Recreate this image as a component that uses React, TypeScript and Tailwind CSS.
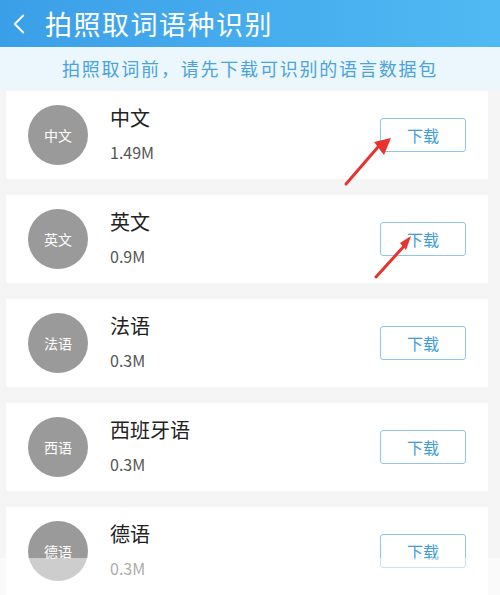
import { ChevronLeft } from "lucide-react";

const langs = [
  { short: "中文", name: "中文", size: "1.49M" },
  { short: "英文", name: "英文", size: "0.9M" },
  { short: "法语", name: "法语", size: "0.3M" },
  { short: "西语", name: "西班牙语", size: "0.3M" },
  { short: "德语", name: "德语", size: "0.3M" },
];

const font = { fontFamily: '"Noto Sans CJK SC", "Noto Sans", sans-serif' };

export default function App() {
  return (
    <div className="relative w-[500px] h-[595px] overflow-hidden bg-[#f5f5f5]" style={font}>
      <header className="h-[47px] flex items-center bg-gradient-to-r from-[#3b9fe8] to-[#50b9f3] text-white">
        <ChevronLeft className="w-[34px] h-[34px] ml-[2px]" strokeWidth={1.3} />
        <h1 className="ml-[9px] text-[27px] leading-none tracking-[1.5px]">拍照取词语种识别</h1>
      </header>
      <div className="h-[43px] flex items-center justify-center bg-[#ebf6fd] text-[#4aa3dc] text-[18px] tracking-[1.8px]">
        拍照取词前，请先下载可识别的语言数据包
      </div>

      <div className="flex flex-col gap-[16px] pl-[6px] pr-[12px] pt-[1px]">
        {langs.map((l) => (
          <div key={l.short} className="h-[88px] bg-white flex items-center pl-[22px] pr-[22px]">
            <div className="w-[60px] h-[60px] rounded-full bg-[#9a9a9a] flex items-center justify-center text-white text-[14px]">
              {l.short}
            </div>
            <div className="ml-[22px] mb-[4px] flex-1 flex flex-col">
              <span className="text-[20px] leading-[26px] text-[#222]">{l.name}</span>
              <span className="mt-[11px] text-[16px] leading-[20px] text-[#555]">{l.size}</span>
            </div>
            <button className="w-[86px] h-[34px] border border-[#8cc6ea] rounded-[3px] text-[#3d9bd8] text-[16px]">
              下载
            </button>
          </div>
        ))}
      </div>

      <div className="absolute left-0 right-0 top-[558px] bottom-0 bg-white/50" />

      <svg className="absolute left-0 top-0" width="500" height="595" viewBox="0 0 500 595">
        <path d="M346 184 L378 147" stroke="#e8322f" strokeWidth="3" strokeLinecap="round" />
        <path d="M374 142 L391 138 L384 155 Z" fill="#e8322f" />
        <path d="M376 277 L405 245" stroke="#e8322f" strokeWidth="3" strokeLinecap="round" />
        <path d="M400 243 L411 236 L406 250 Z" fill="#e8322f" />
      </svg>
    </div>
  );
}
